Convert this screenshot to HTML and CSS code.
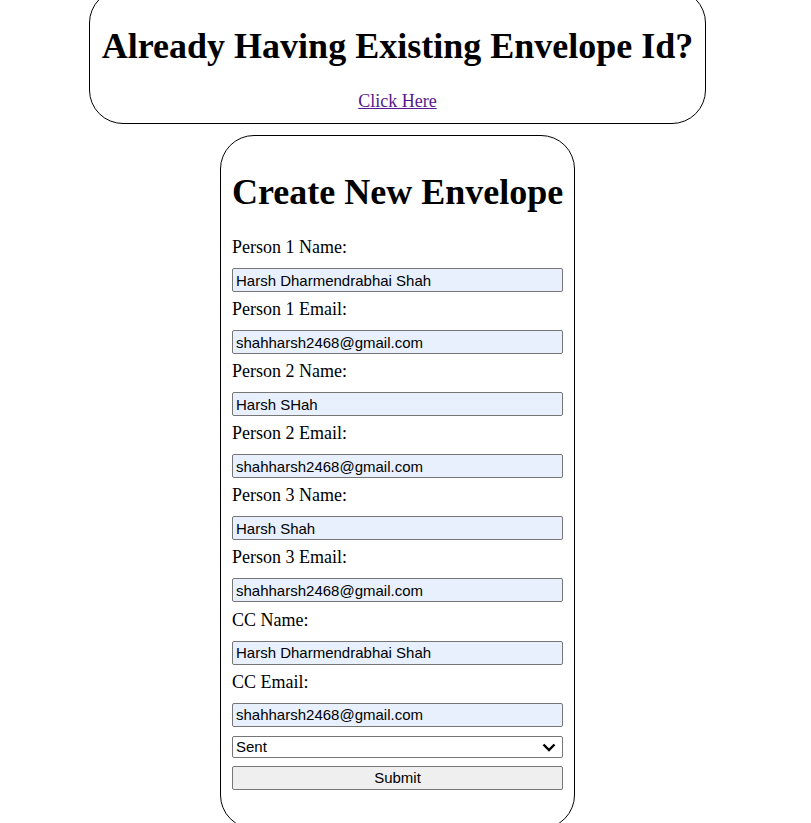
FILE: index.html
```html
<!DOCTYPE html>
<html>
<head>
<meta charset="utf-8">
<link rel="stylesheet" href="styles.css">
</head>
<body>
<div class="page">
  <div class="card existing">
    <h1 class="title">Already Having Existing Envelope Id?</h1>
    <a class="link" href="#">Click Here</a>
  </div>
  <form class="card create">
    <h1 class="title">Create New Envelope</h1>
    <label class="label">Person 1 Name:</label>
    <input class="field" type="text" value="Harsh Dharmendrabhai Shah">
    <label class="label">Person 1 Email:</label>
    <input class="field" type="text" value="shahharsh2468@gmail.com">
    <label class="label">Person 2 Name:</label>
    <input class="field" type="text" value="Harsh SHah">
    <label class="label">Person 2 Email:</label>
    <input class="field" type="text" value="shahharsh2468@gmail.com">
    <label class="label">Person 3 Name:</label>
    <input class="field" type="text" value="Harsh Shah">
    <label class="label">Person 3 Email:</label>
    <input class="field" type="text" value="shahharsh2468@gmail.com">
    <label class="label">CC Name:</label>
    <input class="field" type="text" value="Harsh Dharmendrabhai Shah">
    <label class="label">CC Email:</label>
    <input class="field last" type="text" value="shahharsh2468@gmail.com">
    <div class="select-wrap">
      <select class="status">
        <option>Sent</option>
        <option>Created</option>
      </select>
      <svg class="chevron" width="14" height="9" viewBox="0 0 14 9"><path d="M1.5 1.5 L7 7 L12.5 1.5" fill="none" stroke="#000" stroke-width="2.4"/></svg>
    </div>
    <button class="submit" type="button">Submit</button>
  </form>
</div>
</body>
</html>
```
FILE: styles.css
```css
html, body {
  margin: 0;
  padding: 0;
  background: #ffffff;
}
body {
  font-family: "Liberation Serif", "Times New Roman", serif;
  font-size: 18px;
  color: #000;
  overflow: hidden;
}
.page {
  width: 795px;
  display: flex;
  flex-direction: column;
  align-items: center;
  margin-top: -11px;
}
.card {
  border: 1px solid #000;
  border-radius: 34px;
  box-sizing: border-box;
}
.existing {
  padding: 11px 12px;
  text-align: center;
  margin-bottom: 11px;
}
.title {
  font-size: 36px;
  font-weight: bold;
  margin: 24px 0;
  line-height: normal;
}
.link {
  color: #551a8b;
  text-decoration: underline;
  font-size: 18px;
}
.create {
  width: 355px;
  padding: 11px 11px 38px;
  display: flex;
  flex-direction: column;
  margin: 0;
}
.create .title {
  margin: 24px 0 24px;
  white-space: nowrap;
}
.label {
  display: block;
  line-height: normal;
  margin-bottom: 10px;
}
.field {
  box-sizing: border-box;
  height: 24px;
  width: 100%;
  margin: 0 0 7.1px;
  padding: 1px 3px;
  font-family: "Liberation Sans", Arial, sans-serif;
  font-size: 15px;
  color: #000;
  background: #e8f0fe;
  border: 1px solid #767676;
  border-radius: 2px;
  outline: none;
}
.field.last {
  margin-bottom: 9px;
}
.select-wrap {
  position: relative;
  margin: 0 0 8px;
}
.status {
  display: block;
  box-sizing: border-box;
  height: 22px;
  width: 100%;
  margin: 0;
  padding: 0 3px;
  font-family: "Liberation Sans", Arial, sans-serif;
  font-size: 15px;
  color: #000;
  background: #fff;
  border: 1px solid #767676;
  border-radius: 2px;
  appearance: none;
  -webkit-appearance: none;
}
.chevron {
  position: absolute;
  right: 7px;
  top: 7px;
  pointer-events: none;
}
.submit {
  box-sizing: border-box;
  height: 24px;
  width: 100%;
  margin: 0;
  padding: 1px 6px;
  font-family: "Liberation Sans", Arial, sans-serif;
  font-size: 15px;
  color: #000;
  background: #efefef;
  border: 1px solid #767676;
  border-radius: 2px;
}
```
